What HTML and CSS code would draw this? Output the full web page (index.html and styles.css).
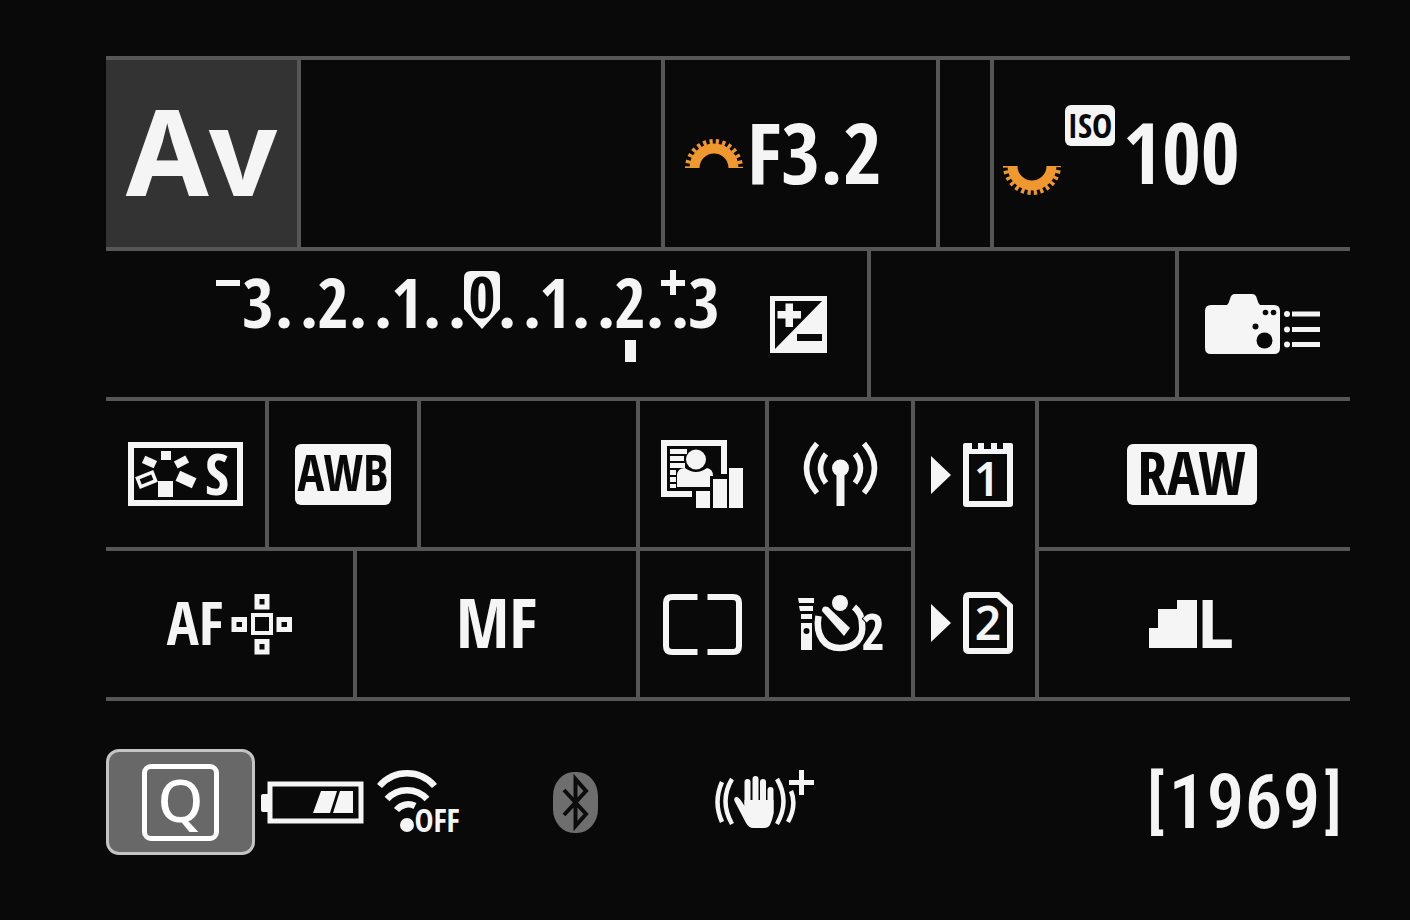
FILE: index.html
```
<!DOCTYPE html>
<html lang="en">
<head>
<meta charset="utf-8">
<title>Camera settings</title>
<link rel="stylesheet" href="styles.css">
</head>
<body>
<main class="screen">
  <section class="row exposure">
    <div class="cell mode">Av</div>
    <div class="cell"></div>
    <div class="cell aperture">
      <svg class="dial" width="58" height="29" viewBox="0 0 58 29">
        <path d="M9.500 29A19.500 19.500 0 0 1 48.500 29" stroke-width="10"/>
        <path d="M2.500 29A26.500 26.500 0 0 1 55.500 29" stroke-width="5" stroke-dasharray="3.200 3.200" stroke-dashoffset="1.600"/>
      </svg>
      <span class="value">F3.2</span>
    </div>
    <div class="cell"></div>
    <div class="cell iso">
      <svg class="dial dial-rear" width="58" height="29" viewBox="0 0 58 29">
        <path d="M9.500 0A19.500 19.500 0 0 0 48.500 0" stroke-width="10"/>
        <path d="M2.500 0A26.500 26.500 0 0 0 55.500 0" stroke-width="5" stroke-dasharray="3.200 3.200" stroke-dashoffset="1.600"/>
      </svg>
      <span class="badge badge-iso">ISO</span>
      <span class="value">100</span>
    </div>
  </section>

  <section class="row metering">
    <div class="cell level">
      <svg class="scale" width="504" height="92" viewBox="0 0 504 92">
        <path d="M2 10H26V16H2Z"/>
        <text class="num" x="44" y="58">3</text>
        <text class="dot" x="70" y="58">.</text><text class="dot" x="95" y="58">.</text>
        <text class="num" x="119" y="58">2</text>
        <text class="dot" x="144" y="58">.</text><text class="dot" x="169" y="58">.</text>
        <text class="num" x="193" y="58">1</text>
        <text class="dot" x="218" y="58">.</text><text class="dot" x="243" y="58">.</text>
        <path d="M257 1H279Q286 1 286 8V39L268 59L250 39V8Q250 1 257 1Z"/>
        <text class="zero" x="268" y="48">0</text>
        <text class="dot" x="293" y="58">.</text><text class="dot" x="318" y="58">.</text>
        <text class="num" x="341" y="58">1</text>
        <text class="dot" x="367" y="58">.</text><text class="dot" x="392" y="58">.</text>
        <text class="num" x="416" y="58">2</text>
        <text class="dot" x="441" y="58">.</text><text class="dot" x="466" y="58">.</text>
        <path d="M447 10H456V0H462V10H471V16H462V25H456V16H447Z"/>
        <text class="num" x="490" y="58">3</text>
        <rect x="411" y="70" width="11" height="22"/>
      </svg>
      <svg width="57" height="57" viewBox="0 0 57 57">
        <path d="M0 0H57V57H0Z"/>
        <path class="ink" d="M5 5H52L5 53ZM27 38H52V45H27Z"/>
        <path d="M15.500 7.500H23V15H31V22.500H23V31H15.500V22.500H7.500V15H15.500Z"/>
      </svg>
    </div>
    <div class="cell"></div>
    <div class="cell end">
      <svg width="116" height="60" viewBox="0 0 116 60">
        <path d="M6 11H22Q24 9 25 5Q26 0 30 0H47Q51 0 52 5Q53 9 55 11H69Q75 11 75 17V54Q75 60 69 60H6Q0 60 0 54V17Q0 11 6 11Z"/>
        <g class="ink"><circle cx="60.500" cy="18.500" r="2.800"/><circle cx="68.500" cy="18.500" r="2.800"/><circle cx="50.500" cy="32.500" r="3"/><circle cx="59.500" cy="46.500" r="8"/></g>
        <circle cx="82" cy="20" r="3"/><circle cx="82" cy="35.500" r="3"/><circle cx="82" cy="50.500" r="3"/>
        <path d="M87 17.500H115V22.500H87ZM87 33H115V38H87ZM87 48H115V53H87Z"/>
      </svg>
    </div>
  </section>

  <section class="settings">
    <div class="cell span-style">
      <svg width="115" height="64" viewBox="0 0 115 64">
        <rect class="line" x="3" y="3" width="109" height="58" stroke-width="6"/>
        <path d="M33 9H43V18H33ZM30 39H45V55H30Z"/>
        <rect x="15" y="16" width="13" height="8" transform="rotate(25 21.500 20)"/>
        <rect x="47" y="16" width="13" height="8" transform="rotate(-28 53.500 20)"/>
        <rect x="49" y="32" width="18" height="11" transform="rotate(25 58 37.500)"/>
        <rect class="line" x="10.500" y="33" width="16" height="9" stroke-width="3.500" transform="rotate(-22 18.500 37.500)"/>
        <text class="style-name" x="89" y="53">S</text>
      </svg>
    </div>
    <div class="cell span-wb"><span class="badge badge-wb">AWB</span></div>
    <div class="cell span-blank"></div>
    <div class="cell">
      <svg width="83" height="68" viewBox="0 0 83 68">
        <path class="line" d="M31 54H3V3H63V34" stroke-width="6"/>
        <path d="M9 9H26V14H9ZM9 16H23V21H9ZM9 23H24V28H9ZM9 30H15V35H9ZM9 37H15V42H9ZM9 44H15V48H9Z"/>
        <circle cx="35" cy="19.500" r="10"/>
        <path d="M16 47V36Q16 28 24 28Q35 36 46 28Q52 29 52 36V47Z"/>
        <path class="ink" d="M49 36H68V68H49Z"/>
        <path d="M35 51H49V68H35ZM52 39H66V68H52ZM68 28H82V68H68Z"/>
      </svg>
    </div>
    <div class="cell">
      <svg width="73" height="64" viewBox="0 0 73 64">
        <circle cx="36.500" cy="26" r="8.500"/><path d="M32.500 29H40.500V64H32.500Z"/>
        <path class="line" d="M22 12Q11 26 22 41M51 12Q62 26 51 41M13 1.500Q-8 26 13 51M60 1.500Q81 26 60 51" stroke-width="5.500"/>
      </svg>
    </div>
    <div class="cell cards">
      <div class="slot">
        <svg width="20" height="38" viewBox="0 0 20 38"><path d="M0 0L20 19L0 38Z"/></svg>
        <svg width="50" height="64" viewBox="0 0 50 64">
          <path fill-rule="evenodd" d="M2 0H9V6H15V0H21V6H28V0H34V6H40V0H48Q50 0 50 2V61Q50 64 47 64H3Q0 64 0 61V2Q0 0 2 0ZM6 11V58H44V11Z"/>
          <text class="slot-number" x="24" y="53">1</text>
        </svg>
      </div>
      <div class="slot">
        <svg width="20" height="38" viewBox="0 0 20 38"><path d="M0 0L20 19L0 38Z"/></svg>
        <svg width="50" height="62" viewBox="0 0 50 62">
          <path class="line" d="M6 3H35L47 14V56Q47 59 44 59H6Q3 59 3 56V6Q3 3 6 3Z" stroke-width="6"/>
          <text class="slot-number" x="25" y="48">2</text>
        </svg>
      </div>
    </div>
    <div class="cell end"><span class="badge badge-raw">RAW</span></div>

    <div class="cell span-af">
      <span class="label label-af">AF</span>
      <svg width="61" height="61" viewBox="0 0 61 61">
        <rect class="line" x="22" y="21" width="18" height="18" stroke-width="4"/>
        <path class="line" d="M26 2.500H36V13H26ZM26 47.500H36V58H26ZM3 25.500H13.500V35.500H3ZM48 25.500H58.500V35.500H48Z" stroke-width="5"/>
      </svg>
    </div>
    <div class="cell span-mf"><span class="label">MF</span></div>
    <div class="cell">
      <svg width="79" height="61" viewBox="0 0 79 61">
        <path class="line" d="M34.500 3H9Q3 3 3 9V52Q3 58 9 58H34.500M44.500 3H70Q76 3 76 9V52Q76 58 70 58H44.500" stroke-width="6"/>
      </svg>
    </div>
    <div class="cell">
      <svg width="87" height="58" viewBox="0 0 87 58">
        <path fill-rule="evenodd" d="M1 3H17V8H2ZM2 11H16V16H3ZM4 19H15V24H4ZM4 28H15V55H4ZM9.500 33A3 3 0 1 0 9.500 39A3 3 0 1 0 9.500 33Z"/>
        <circle cx="43" cy="8" r="8"/>
        <path class="line" d="M21.500 21C18 41 28 53 43 53C58 53 67 43 65 29C65 22 62 16 57 12" stroke-width="6.500"/>
        <path d="M25 16Q25 10 31 12L53 33L47 41Z"/>
        <text class="seconds" x="76" y="55">2</text>
      </svg>
    </div>
    <div class="cell end quality">
      <svg width="48" height="48" viewBox="0 0 48 48"><path d="M28 0H48V48H0V28H9V9H28Z"/></svg>
      <span class="label label-size">L</span>
    </div>
  </section>

  <footer class="status">
    <button class="quick" type="button"><span class="quick-key">Q</span></button>
    <svg class="battery" width="102" height="41" viewBox="0 0 102 41">
      <rect class="line" x="9" y="2" width="91" height="37" stroke-width="5"/>
      <path d="M2 12H7V30H2Q0 30 0 28V14Q0 12 2 12ZM60 9H76L69 31H52ZM79 9H92V31H72Z"/>
    </svg>
    <svg class="wifi" width="79" height="62" viewBox="0 0 79 62">
      <path class="line" d="M2.500 15A36 36 0 0 1 57.500 15M10 28A27 27 0 0 1 50 28M19.500 39A15 15 0 0 1 38 35" stroke-width="6.500"/>
      <circle cx="30" cy="54" r="7"/>
      <text class="off" x="60" y="61">OFF</text>
    </svg>
    <svg class="bluetooth" width="45" height="61" viewBox="0 0 45 61">
      <rect width="45" height="61" rx="21" ry="24"/>
      <path d="M11 18L33 42L22.500 54V7L33 19L11 43"/>
    </svg>
    <svg class="stabilizer" width="100" height="59" viewBox="0 0 100 59">
      <path class="line" d="M8 12Q-1 32 8 52M18 9Q5 31 18 54M63 9Q76 31 63 54M77 21Q83 35 74 52" stroke-width="4.500"/>
      <path d="M75 10H85V0H90V10H100V15H90V25H85V15H75Z"/>
      <path class="line fingers" d="M33.500 12V38M41.500 9V38M49 12V38M56.500 20V42" stroke-width="6"/>
      <path d="M30.500 30H59.500V44Q58 51 56 55Q54 58 50 58H39Q35 58 32 53L21 32Q19 28 22 27Q25 26 30.500 36Z"/>
    </svg>
    <span class="shots"><span class="bracket">[</span>1969<span class="bracket">]</span></span>
  </footer>
</main>
</body>
</html>
```
FILE: styles.css
```
:root {
  --bg: #090909;
  --fg: #f5f5f5;
  --rule: #565656;
  --condensed: "Open Sans Condensed", "Open Sans", sans-serif;
}

* { box-sizing: border-box; }

body {
  margin: 0;
  background: var(--bg);
  color: var(--fg);
  font-family: "Noto Sans", sans-serif;
}

svg { display: block; flex: none; fill: var(--fg); overflow: visible; }
.ink { fill: var(--bg); }
.line { fill: none; stroke: var(--fg); }
.fingers { stroke-linecap: round; }
svg text { text-anchor: middle; font-family: var(--condensed); font-weight: 700; }

.screen { padding: 56px 60px 56px 106px; }

.row { display: grid; border-top: 4px solid var(--rule); }
.exposure { grid-template-columns: 195fr 364fr 275fr 54fr 356fr; min-height: 191px; }
.metering { grid-template-columns: 765fr 308fr 171fr; min-height: 150px; }

.settings {
  display: grid;
  grid-template-columns: 163fr 88fr 64fr 219fr 129fr 146fr 124fr 311fr;
  grid-template-rows: repeat(2, 150px);
  border-bottom: 4px solid var(--rule);
}

.cell {
  display: flex;
  align-items: center;
  justify-content: center;
  min-width: 0;
  border-right: 4px solid var(--rule);
}
.row .cell:last-child { border-right: 0; }
.settings .cell { border-top: 4px solid var(--rule); }
.row .end { padding-right: 4px; }
.settings .end { border-right: 0; padding-right: 6px; }

.span-wb, .span-af, .span-mf { grid-column: span 2; }
.span-af { gap: 8px; }

.mode {
  padding-bottom: 8px;
  background: #333;
  font-size: 120px;
  font-weight: 700;
  line-height: 1;
}

.value {
  margin-bottom: 4px;
  font-family: var(--condensed);
  font-size: 84px;
  font-weight: 700;
  line-height: 1;
}
.dial { fill: none; stroke: #f09830; }
.aperture { justify-content: flex-start; padding-left: 20px; gap: 4px; }
.iso { justify-content: flex-start; padding-left: 9px; gap: 4px; }
.iso .value { padding-left: 4px; }
.dial-rear { margin-top: 54px; }

.badge {
  display: flex;
  align-items: center;
  justify-content: center;
  padding-bottom: 4px;
  border-radius: 6px;
  background: var(--fg);
  color: var(--bg);
  font-family: var(--condensed);
  font-weight: 700;
  line-height: 1;
}
.badge-iso { width: 50px; height: 41px; margin-bottom: 56px; padding-bottom: 2px; font-size: 34px; }
.badge-wb { width: 96px; height: 61px; font-size: 50px; }
.badge-raw { width: 130px; height: 61px; font-size: 60px; }

.level { justify-content: flex-end; padding-right: 40px; gap: 52px; }
.scale { margin-bottom: 16px; }
.scale .num { font-size: 68px; }
.scale .zero { font-size: 58px; fill: var(--bg); }
.scale .dot { font-family: Lato, sans-serif; font-weight: 900; font-size: 68px; }

.style-name { font-size: 58px; }
svg .slot-number { font-family: "Noto Sans", sans-serif; font-size: 46px; font-weight: 600; }
.seconds { font-size: 50px; stroke: var(--bg); stroke-width: 2px; paint-order: stroke; }

.cards { grid-row: span 2; flex-direction: column; }
.slot { flex: 1; display: flex; align-items: center; gap: 12px; padding-right: 6px; }

.label {
  margin-bottom: 4px;
  font-family: var(--condensed);
  font-size: 68px;
  font-weight: 700;
  line-height: 1;
}
.label-af { font-size: 60px; }
.label-size { font-family: "Noto Sans", sans-serif; font-size: 66px; }

.status { display: flex; align-items: center; padding: 48px 8px 0 0; }
.quick {
  display: flex;
  align-items: center;
  justify-content: center;
  width: 149px;
  height: 106px;
  padding: 0;
  border: 3px solid #c4c4c4;
  border-radius: 13px;
  background: #686868;
  color: #fff;
}
.quick-key {
  width: 77px;
  height: 77px;
  border: 5px solid #fff;
  border-radius: 9px;
  font: 500 58px/62px "Noto Sans", sans-serif;
}
.battery { margin-left: 6px; }
.wifi { margin-left: 14px; }
.wifi .off { font-size: 32px; }
.bluetooth { margin-left: 97px; fill: #6e6e6e; }
.bluetooth path { fill: none; stroke: #0c0c0c; stroke-width: 4px; }
.stabilizer { margin: 0 0 6px 116px; }
.shots {
  display: flex;
  align-items: center;
  gap: 4px;
  margin-left: auto;
  font: 500 76px/80px "Roboto Condensed", sans-serif;
}
.bracket { font-size: 68px; font-weight: 500; }
```
